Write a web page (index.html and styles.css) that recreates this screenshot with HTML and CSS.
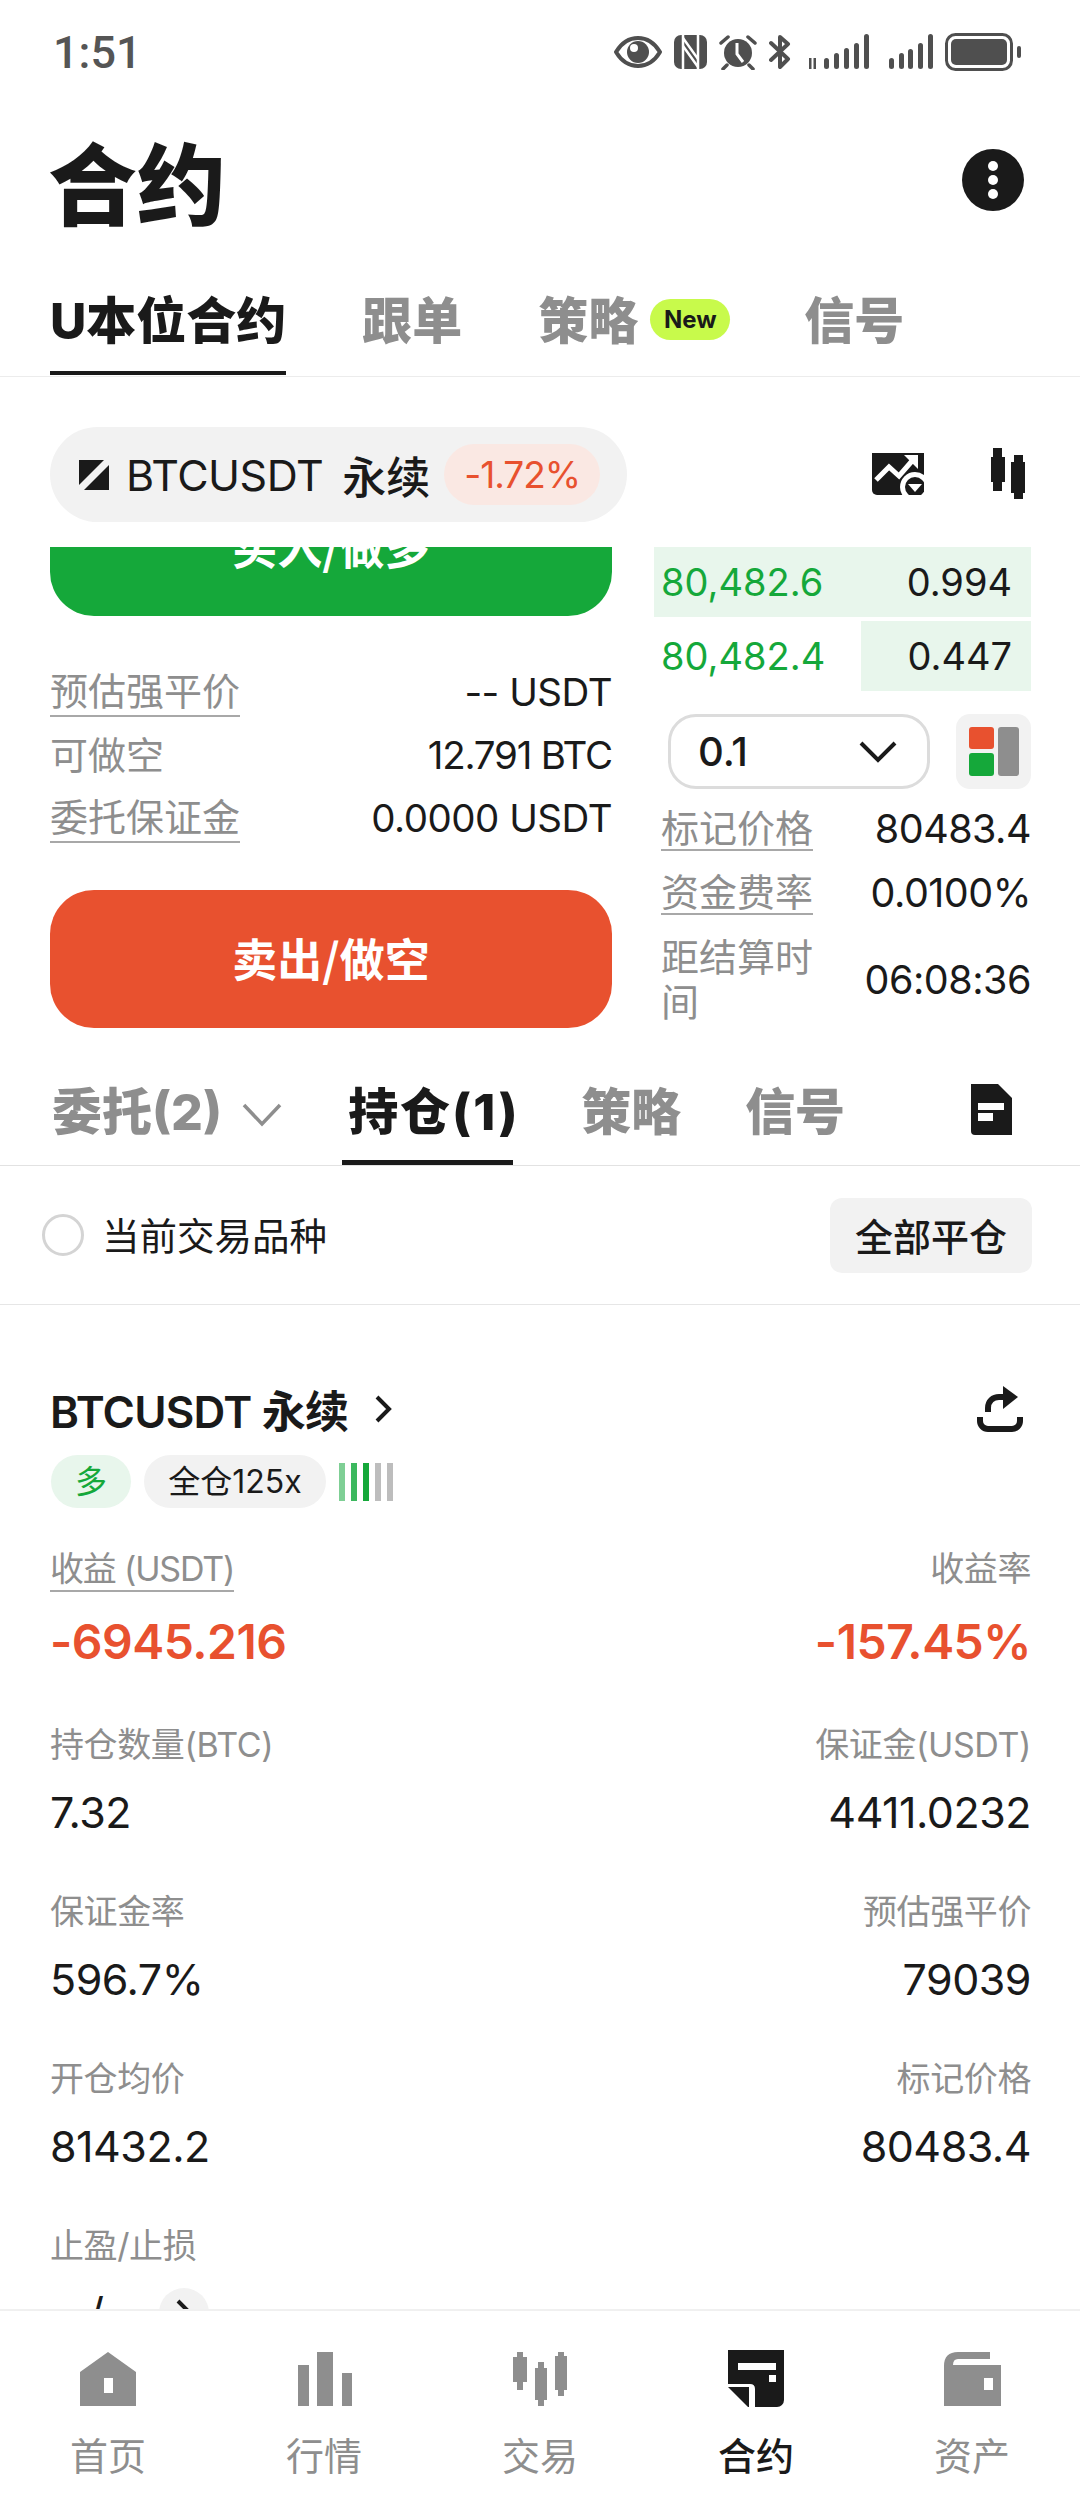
FILE: index.html
```html
<!DOCTYPE html>
<html lang="zh-CN">
<head>
<meta charset="utf-8">
<title>合约</title>
<link rel="stylesheet" href="styles.css">
</head>
<body>
<div class="page">
  <div class="status">
    <span class="time">1:51</span>
    <div class="status-icons">
      <svg class="si" width="48" height="34" viewBox="0 0 48 34"><path d="M2 17C8 7 15 3 24 3s16 4 22 14c-6 10-13 14-22 14S8 27 2 17Z" fill="none" stroke="#4f4f4f" stroke-width="4" stroke-linejoin="round"/><circle cx="24" cy="17" r="11" fill="#4f4f4f"/><circle cx="20" cy="13" r="4" fill="#fff"/></svg>
      <svg class="si" width="33" height="34" viewBox="0 0 33 34"><rect width="33" height="34" rx="7" fill="#4f4f4f"/><path d="M9 0V34M24 0V34" stroke="#fff" stroke-width="2.500"/><path d="M9 3L24 24M9 11L24 32" stroke="#fff" stroke-width="2.500"/></svg>
      <svg class="si" width="38" height="36" viewBox="0 0 38 36"><circle cx="19" cy="19" r="14" fill="#4f4f4f"/><path d="M18 9v11l6 8" fill="none" stroke="#fff" stroke-width="3"/><path d="M2 9l7-6M36 9l-7-6M8 31l-4 4M30 31l4 4" stroke="#4f4f4f" stroke-width="3.5" stroke-linecap="round"/></svg>
      <svg class="si" width="22" height="36" viewBox="0 0 22 36"><path d="M2 9l17 16-8 8V3l8 7L2 26" fill="none" stroke="#4f4f4f" stroke-width="4" stroke-linejoin="round" stroke-linecap="round"/></svg>
      <svg class="si" width="65" height="36" viewBox="0 0 65 36"><g fill="#4f4f4f"><path d="M5 24h2.500v11H5zM9.500 24H12v11H9.500z"/><rect x="20" y="24" width="5" height="11" rx="2.500"/><rect x="30" y="19" width="5" height="16" rx="2.500"/><rect x="40" y="14" width="5" height="21" rx="2.500"/><rect x="50" y="9" width="5" height="26" rx="2.500"/><rect x="60" y="0" width="5" height="35" rx="2.500"/></g></svg>
      <svg class="si" width="44" height="36" viewBox="0 0 44 36"><g fill="#4f4f4f"><rect x="0" y="24" width="5" height="11" rx="2.500"/><rect x="10" y="19" width="5" height="16" rx="2.500"/><rect x="19" y="15" width="5" height="20" rx="2.500"/><rect x="29" y="9" width="5" height="26" rx="2.500"/><rect x="39" y="0" width="5" height="35" rx="2.500"/></g></svg>
      <svg class="si" width="77" height="38" viewBox="0 0 77 38"><rect x="1.500" y="1.500" width="65" height="35" rx="9" fill="none" stroke="#4f4f4f" stroke-width="3"/><rect x="6" y="6" width="56" height="26" rx="5" fill="#4f4f4f"/><rect x="72" y="13" width="4" height="12" rx="2" fill="#4f4f4f"/></svg>
    </div>
  </div>

  <header class="title-row">
    <h1 class="title">合约</h1>
    <svg class="more" width="62" height="62" viewBox="0 0 62 62"><circle cx="31" cy="31" r="31" fill="#1a1a1a"/><circle cx="31" cy="17" r="5" fill="#fff"/><circle cx="31" cy="31" r="5" fill="#fff"/><circle cx="31" cy="45" r="5" fill="#fff"/></svg>
  </header>

  <nav class="tabs">
    <span class="tab tab-on">U本位合约</span>
    <span class="tab">跟单</span>
    <span class="tab tab-new">策略<em class="new">New</em></span>
    <span class="tab">信号</span>
  </nav>

  <main class="scroll">
    <section class="ticker">
      <div class="pill">
        <svg class="logo" width="30" height="30" viewBox="0 0 30 30"><path d="M0 0H25L0 25Z" fill="#1a1a1a"/><path d="M30 5V30H5Z" fill="#1a1a1a"/></svg>
        <span class="sym">BTCUSDT</span>
        <span class="perp">永续</span>
        <span class="chg">-1.72%</span>
      </div>
      <div class="ticker-icons">
        <svg width="52" height="42" viewBox="0 0 52 42"><path d="M0 0H52V42H5a5 5 0 0 1-5-5Z" fill="#1a1a1a"/><path d="M4 27L17 14l10 9L40 8" fill="none" stroke="#fff" stroke-width="5"/><path d="M32 2h14v14Z" fill="#fff"/><circle cx="43" cy="34" r="15" fill="#fff"/><circle cx="43" cy="34" r="10" fill="#1a1a1a"/><path d="M36 31h14l-7 8Z" fill="#fff"/></svg>
        <svg width="36" height="52" viewBox="0 0 36 52"><path d="M3 0H12V9H15V34H12V43H3V34H1V9H3ZM24 7H33V14H35V45H33V51H24V45H21V14H24Z" fill="#1a1a1a"/></svg>
      </div>
    </section>

    <section class="trade">
      <div class="left">
        <button class="btn btn-buy">买入/做多</button>
        <div class="kv"><span class="k u">预估强平价</span><span class="v">-- USDT</span></div>
        <div class="kv"><span class="k">可做空</span><span class="v v-tight">12.791 BTC</span></div>
        <div class="kv"><span class="k u">委托保证金</span><span class="v">0.0000 USDT</span></div>
        <button class="btn btn-sell">卖出/做空</button>
      </div>
      <div class="right">
        <div class="book-row"><i class="depth" style="width:100%"></i><span class="bp">80,482.6</span><span class="bq">0.994</span></div>
        <div class="book-row"><i class="depth" style="width:45%"></i><span class="bp">80,482.4</span><span class="bq">0.447</span></div>
        <div class="tools">
          <div class="select"><span>0.1</span>
            <svg width="38" height="22" viewBox="0 0 38 22"><path d="M2 2l17 17L36 2" fill="none" stroke="#1a1a1a" stroke-width="4"/></svg>
          </div>
          <div class="layout">
            <svg width="50" height="49" viewBox="0 0 50 49"><rect x="0" y="0" width="25" height="22" rx="3" fill="#e8512f"/><rect x="0" y="26" width="25" height="23" rx="3" fill="#15a83a"/><rect x="29" y="0" width="21" height="49" rx="3" fill="#8e8e8e"/></svg>
          </div>
        </div>
        <div class="info"><span class="ik u">标记价格</span><span class="iv">80483.4</span></div>
        <div class="info"><span class="ik u">资金费率</span><span class="iv">0.0100%</span></div>
        <div class="info"><span class="ik">距结算时间</span><span class="iv">06:08:36</span></div>
      </div>
    </section>

    <nav class="otabs">
      <span class="otab">委托(2)</span>
      <svg class="ochev" width="40" height="24" viewBox="0 0 40 24"><path d="M2 2l18 19L38 2" fill="none" stroke="#8e8e8e" stroke-width="3.500"/></svg>
      <span class="otab otab-on">持仓(1)</span>
      <span class="otab">策略</span>
      <span class="otab">信号</span>
      <svg class="doc" width="41" height="51" viewBox="0 0 41 51"><path d="M0 0H27L41 14V51H4a4 4 0 0 1-4-4Z" fill="#1a1a1a"/><rect x="7" y="19" width="26" height="7" fill="#fff"/><rect x="7" y="29" width="15" height="8" fill="#fff"/></svg>
    </nav>

    <div class="filter">
      <label class="check"><i class="radio"></i><span class="check-text">当前交易品种</span></label>
      <button class="closeall">全部平仓</button>
    </div>

    <section class="pos">
      <div class="pos-head">
        <div class="pos-name">BTCUSDT 永续
          <svg width="18" height="30" viewBox="0 0 18 30"><path d="M3 3l12 12L3 27" fill="none" stroke="#1a1a1a" stroke-width="4"/></svg>
        </div>
        <svg class="share" width="46" height="46" viewBox="0 0 46 46"><path d="M11 26v-4c0-7 5-11 11-11h10" fill="none" stroke="#1a1a1a" stroke-width="6"/><path d="M26 0l15 11-15 12Z" fill="#1a1a1a"/><path d="M3 31v4a8 8 0 0 0 8 8h24a8 8 0 0 0 8-8v-4" fill="none" stroke="#1a1a1a" stroke-width="6"/></svg>
      </div>
      <div class="tags">
        <span class="tag tag-long">多</span>
        <span class="tag tag-cross">全仓125x</span>
        <span class="bars"><i class="b1"></i><i class="b2"></i><i class="b3"></i><i class="b4"></i><i class="b4"></i></span>
      </div>
      <div class="stat stat-first">
        <div><div class="sl"><span class="u">收益 (USDT)</span></div><div class="sv sv-pnl">-6945.216</div></div>
        <div class="r"><div class="sl">收益率</div><div class="sv sv-pnl">-157.45%</div></div>
      </div>
      <div class="stat">
        <div><div class="sl">持仓数量(BTC)</div><div class="sv">7.32</div></div>
        <div class="r"><div class="sl">保证金(USDT)</div><div class="sv">4411.0232</div></div>
      </div>
      <div class="stat">
        <div><div class="sl">保证金率</div><div class="sv">596.7%</div></div>
        <div class="r"><div class="sl">预估强平价</div><div class="sv">79039</div></div>
      </div>
      <div class="stat">
        <div><div class="sl">开仓均价</div><div class="sv">81432.2</div></div>
        <div class="r"><div class="sl">标记价格</div><div class="sv">80483.4</div></div>
      </div>
      <div class="stat">
        <div><div class="sl">止盈/止损</div>
          <div class="sv sv-tp">--/--
            <span class="tp-btn"><svg width="18" height="30" viewBox="0 0 18 30"><path d="M3 3l12 12L3 27" fill="none" stroke="#1a1a1a" stroke-width="4"/></svg></span>
          </div>
        </div>
      </div>
    </section>
  </main>

  <footer class="bottom">
    <div class="nav-item">
      <svg width="58" height="58" viewBox="0 0 58 58"><path fill-rule="evenodd" d="M29 2L57 22V56H1V22ZM25 28V43H34V28Z" fill="#8e8e8e"/></svg>
      <span>首页</span>
    </div>
    <div class="nav-item">
      <svg width="58" height="58" viewBox="0 0 58 58"><path d="M3 15H14V56H3ZM22 2H38V56H22ZM47 23H57V56H47Z" fill="#8e8e8e"/></svg>
      <span>行情</span>
    </div>
    <div class="nav-item">
      <svg width="58" height="58" viewBox="0 0 58 58"><path d="M6 2H12V7H16V32H12V40H6V32H2V7H6ZM27 12H33V18H36V50H33V56H27V50H24V18H27ZM47 2H53V6H56V40H53V46H47V40H44V6H47Z" fill="#8e8e8e"/></svg>
      <span>交易</span>
    </div>
    <div class="nav-item nav-on">
      <svg width="58" height="58" viewBox="0 0 58 58"><path fill-rule="evenodd" d="M1 0H57V50a7 7 0 0 1-7 7H28V39q0-5-5-5H1ZM11 13V20H49V13ZM42 25V32H49V25Z" fill="#1a1a1a"/><path d="M1 37H22V57H21Z" fill="#1a1a1a"/></svg>
      <span>合约</span>
    </div>
    <div class="nav-item">
      <svg width="58" height="58" viewBox="0 0 58 58"><path fill-rule="evenodd" d="M1 56V16Q1 2 15 2H47V9H15Q10 9 10 15H58V56ZM41 28V40H50V28Z" fill="#8e8e8e"/></svg>
      <span>资产</span>
    </div>
  </footer>
</div>
</body>
</html>
```

FILE: styles.css
```css
* { box-sizing: border-box; }
html, body { margin: 0; padding: 0; background: #fff; }
body {
  font-family: Inter, "Noto Sans CJK SC", sans-serif;
  color: #1a1a1a;
}
.page {
  width: 1080px;
  height: 2504px;
  display: flex;
  flex-direction: column;
  overflow: hidden;
  background: #fff;
}
.status {
  height: 104px;
  flex: none;
  display: flex;
  align-items: center;
  justify-content: space-between;
  padding: 0 58px 0 53px;
}
.time { font: 500 45px/1 Roboto, sans-serif; color: #555; }
.status-icons { display: flex; align-items: center; gap: 12px; }
.si { display: block; }
.si:nth-child(5) { margin-left: 1px; }
.si:nth-child(6) { margin-left: 8px; }

.title-row {
  height: 150px;
  flex: none;
  display: flex;
  align-items: center;
  justify-content: space-between;
  padding: 0 56px 0 48px;
}
.more { margin-top: 1px; }
.title { margin: 0; font-size: 89px; line-height: 1; font-weight: 900; font-family: "Noto Sans CJK SC", sans-serif; }

.tabs {
  height: 123px;
  flex: none;
  display: flex;
  align-items: flex-end;
  padding: 0 0 1px 50px;
  border-bottom: 1px solid #ececec;
  gap: 76px;
}
.tab {
  font-size: 50px;
  line-height: 60px;
  font-weight: 800;
  color: #8e8e8e;
  padding-bottom: 20px;
  border-bottom: 4px solid transparent;
  font-family: Inter, "Noto Sans CJK SC", sans-serif;
}
.tab-on { color: #1a1a1a; border-bottom-color: #1a1a1a; }
.tab-new { display: flex; align-items: flex-start; gap: 12px; margin-right: -2px; }
.new {
  font: 700 24px/41px Inter, sans-serif;
  color: #1a1a1a;
  background: #c8fa4b;
  border-radius: 21px;
  width: 80px;
  text-align: center;
  margin-top: 8px;
}

.scroll { flex: 1; min-height: 0; overflow: hidden; }

.ticker {
  height: 145px;
  padding: 50px 50px 0 50px;
  display: flex;
  justify-content: space-between;
  align-items: flex-start;
}
.pill {
  width: 577px;
  height: 95px;
  border-radius: 48px;
  background: #f2f2f2;
  display: flex;
  align-items: center;
  padding-left: 29px;
}
.logo { flex: none; margin-right: 17px; }
.sym { font-size: 43px; letter-spacing: -0.5px; }
.perp { font-size: 44px; font-weight: 500; margin-left: 19px; }
.chg {
  margin-left: 14px;
  width: 156px;
  height: 61px;
  border-radius: 31px;
  background: #fae8e3;
  color: #e8512f;
  font-size: 37px;
  line-height: 61px;
  text-align: center;
  letter-spacing: -1px;
}
.ticker-icons { display: flex; align-items: center; gap: 66px; padding: 21px 4px 0 0; }
.ticker-icons svg { display: block; }

.trade {
  display: flex;
  justify-content: space-between;
  padding: 25px 49px 0 50px;
  height: 507px;
}
.left { width: 562px; overflow: hidden; }
.btn {
  display: block;
  width: 562px;
  height: 138px;
  border: 0;
  border-radius: 44px;
  color: #fff;
  font: 700 45px/1 "Noto Sans CJK SC", sans-serif;
  padding: 0 0 4px;
}
.btn-buy { background: #15a83a; margin-top: -69px; margin-bottom: 45px; }
.btn-sell { background: #e8512f; margin-top: 41px; }
.kv {
  height: 62px;
  margin-bottom: 1px;
  display: flex;
  justify-content: space-between;
  align-items: center;
}
.k { font-size: 38px; color: #8e8e8e; line-height: 48px; }
.u { border-bottom: 2px solid #a8a8a8; }
.v { font-size: 38.500px; letter-spacing: -0.5px; }
.v-tight { letter-spacing: -1.2px; }

.right { width: 377px; }
.book-row {
  position: relative;
  height: 70px;
  margin-bottom: 4px;
  display: flex;
  justify-content: space-between;
  align-items: center;
  padding: 0 19px 0 7px;
  font-size: 38px;
}
.depth { position: absolute; top: 0; right: 0; bottom: 0; background: #e8f6ec; }
.bp, .bq { position: relative; }
.bp { color: #15a83a; }
.tools { display: flex; justify-content: space-between; margin: 23px 0 18px 14px; }
.select {
  width: 262px;
  height: 75px;
  border: 3px solid #dcdcdc;
  border-radius: 28px;
  display: flex;
  align-items: center;
  justify-content: space-between;
  padding: 0 30px 0 27px;
  font-size: 40px;
  font-weight: 500;
}
.select svg { display: block; }
.layout {
  width: 75px;
  height: 75px;
  border-radius: 14px;
  background: #f2f2f2;
  display: flex;
  align-items: center;
  justify-content: center;
}
.info {
  display: flex;
  justify-content: space-between;
  align-items: center;
  margin: 0 0 20px 7px;
}
.ik { width: 152px; font-size: 38px; line-height: 45px; color: #8e8e8e; }
.ik.u { line-height: 42px; }
.iv { font-size: 39.500px; line-height: 42px; letter-spacing: -0.5px; }

.otabs {
  height: 137px;
  padding: 53px 41px 0 52px;
  display: flex;
  align-items: flex-start;
  border-bottom: 1px solid #e2e2e2;
}
.otab {
  font: 800 50px/60px Inter, "Noto Sans CJK SC", sans-serif;
  color: #8e8e8e;
  padding-bottom: 18px;
}
.otab:nth-of-type(3), .otab:nth-of-type(4) { margin-left: 64px; }
.otab:nth-of-type(3) { margin-left: 68px; }
.otab-on {
  color: #1a1a1a;
  width: 171px;
  padding-left: 6px;
  white-space: nowrap;
  letter-spacing: 2px;
  border-bottom: 5px solid #1a1a1a;
  margin-left: 60px;
}
.ochev { margin: 21px 0 0 20px; }
.doc { margin: 2px 27px 0 auto; }

.filter {
  height: 139px;
  display: flex;
  align-items: center;
  justify-content: space-between;
  padding: 0 48px 0 42px;
  border-bottom: 1px solid #e6e6e6;
}
.check { display: flex; align-items: center; font-size: 37.500px; gap: 18px; }
.check-text { padding-bottom: 4px; }
.radio { width: 42px; height: 42px; border: 3px solid #d4d4d4; border-radius: 50%; }
.closeall {
  width: 202px;
  height: 75px;
  border: 0;
  padding: 0;
  border-radius: 12px;
  background: #f2f2f2;
  font: 500 38px/1 "Noto Sans CJK SC", sans-serif;
  color: #1a1a1a;
}

.pos { padding: 74px 49px 0 50px; }
.pos-head { display: flex; justify-content: space-between; align-items: center; height: 60px; }
.pos-name { display: flex; align-items: center; gap: 26px; font-size: 44px; font-weight: 600; letter-spacing: -0.8px; }
.share { margin-right: 8px; }
.tags { display: flex; align-items: center; height: 53px; margin: 16px 0 0 1px; }
.tag { height: 53px; border-radius: 27px; font-size: 32px; line-height: 53px; text-align: center; }
.tag-long { width: 80px; background: #e8f6ec; color: #15a83a; }
.tag-cross { width: 182px; margin-left: 13px; background: #f2f2f2; }
.bars { display: flex; gap: 6px; margin-left: 13px; }
.bars i { width: 6px; height: 38px; }
.b1 { background: #7fcf95; }
.b2 { background: #3cb85e; }
.b3 { background: #15a83a; }
.b4 { background: #bdbdbd; }

.stat { display: flex; justify-content: space-between; margin-top: 47px; }
.stat-first { margin-top: 38px; }
.r { text-align: right; }
.sl { font-size: 34px; line-height: 46px; color: #8e8e8e; letter-spacing: -0.4px; }
.sl .u { display: inline-block; line-height: 42px; letter-spacing: -1.2px; }
.sv { font-size: 43px; line-height: 60px; margin-top: 14px; letter-spacing: -0.5px; }
.sv-pnl { color: #e8512f; font-size: 48px; font-weight: 600; margin-top: 20px; margin-bottom: 3px; }
.sv-tp { display: flex; align-items: center; gap: 17px; }
.tp-btn {
  width: 50px;
  height: 50px;
  border-radius: 50%;
  background: #f2f2f2;
  display: flex;
  align-items: center;
  justify-content: center;
}

.bottom {
  height: 195px;
  flex: none;
  display: grid;
  grid-template-columns: repeat(5, 216px);
  background: #fff;
  border-top: 2px solid #f0f0f0;
  padding-top: 39px;
}
.nav-item {
  display: flex;
  flex-direction: column;
  align-items: center;
  font-size: 38px;
  line-height: 44px;
  color: #8e8e8e;
  font-family: "Noto Sans CJK SC", sans-serif;
  gap: 24px;
}
.nav-item svg { display: block; }
.nav-on { color: #1a1a1a; font-weight: 500; }
```
